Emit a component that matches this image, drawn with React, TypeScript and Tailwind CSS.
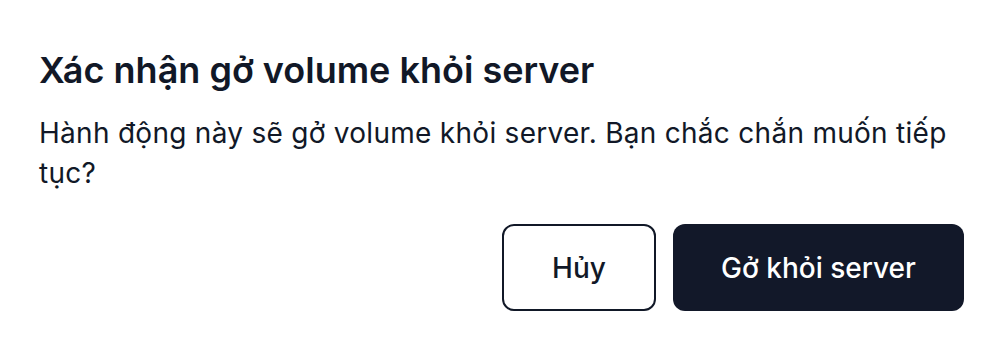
import React from "react";

export default function App() {
  return (
    <div className="w-[994px] h-[340px] bg-white" style={{ fontFamily: "Inter, 'Noto Sans', sans-serif" }}>
      <div className="pl-[39px] pr-[30px] pt-[50px]">
        <h2 className="text-[36px] leading-[40px] font-semibold text-[#111827]">
          Xác nhận gở volume khỏi server
        </h2>
        <p className="mt-[23px] text-[28px] leading-[40px] tracking-[0.28px] text-[#111827] pr-[12px]">
          Hành động này sẽ gở volume khỏi server. Bạn chắc chắn muốn tiếp tục?
        </p>
        <div className="mt-[31px] flex justify-end gap-[17px]">
          <button className="h-[87px] w-[154px] rounded-[12px] border-2 border-[#111827] bg-white text-[28px] font-medium text-[#111827]">
            Hủy
          </button>
          <button className="h-[87px] w-[291px] rounded-[12px] bg-[#121829] text-[28px] font-medium text-white">
            Gở khỏi server
          </button>
        </div>
      </div>
    </div>
  );
}
